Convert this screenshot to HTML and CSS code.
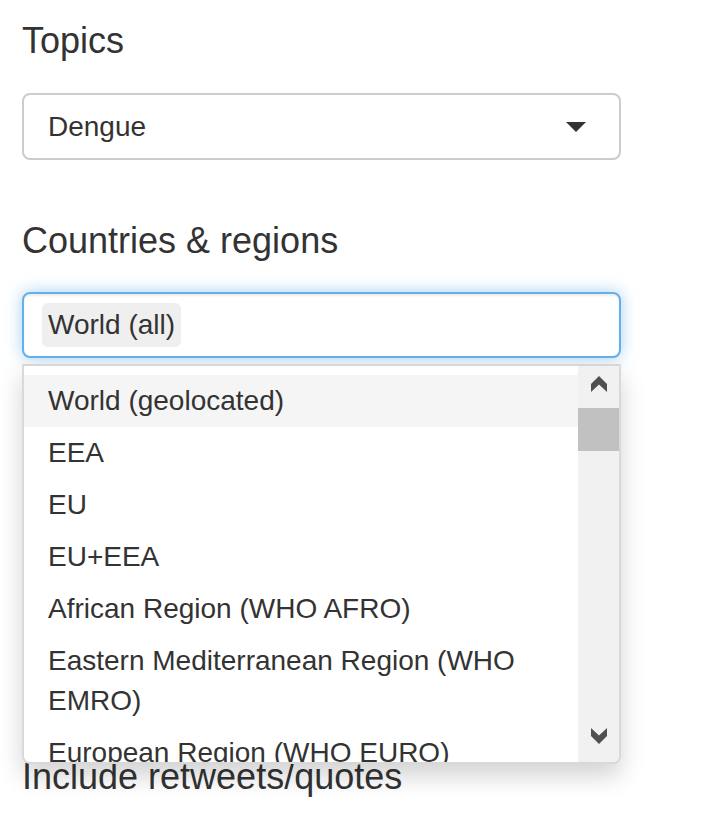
FILE: index.html
```html
<!DOCTYPE html>
<html lang="en">
<head>
<meta charset="utf-8">
<title>Filters</title>
<link rel="stylesheet" href="styles.css">
</head>
<body>
<div class="panel">
  <div class="form-group topics">
    <label class="control-label">Topics</label>
    <div class="select single">
      <span class="value">Dengue</span>
      <span class="caret"></span>
    </div>
  </div>
  <div class="form-group regions">
    <label class="control-label">Countries &amp; regions</label>
    <div class="select-wrap">
      <div class="select multi focus">
        <span class="chip">World (all)</span>
      </div>
      <div class="dropdown">
        <div class="options">
          <div class="option active">World (geolocated)</div>
          <div class="option">EEA</div>
          <div class="option">EU</div>
          <div class="option">EU+EEA</div>
          <div class="option">African Region (WHO AFRO)</div>
          <div class="option">Eastern Mediterranean Region (WHO EMRO)</div>
          <div class="option">European Region (WHO EURO)</div>
          <div class="option">Region of the Americas (WHO AMRO)</div>
        </div>
        <div class="scrollbar">
          <div class="sb-btn up">
            <svg width="16" height="16" viewBox="0 0 16 16"><polygon points="8,0 16,8 16,16 8,8.5 0,16 0,8" fill="#505050"/></svg>
          </div>
          <div class="sb-thumb"></div>
          <div class="sb-btn down">
            <svg width="16" height="16" viewBox="0 0 16 16"><polygon points="0,0 8,7.5 16,0 16,8 8,16 0,8" fill="#505050"/></svg>
          </div>
        </div>
      </div>
    </div>
  </div>
  <div class="form-group retweets">
    <label class="control-label">Include retweets/quotes</label>
  </div>
</div>
</body>
</html>
```

FILE: styles.css
```css
html, body {
  margin: 0;
  padding: 0;
  background: #ffffff;
}

body {
  font-family: "Liberation Sans", Arial, sans-serif;
  color: #333333;
}

.panel {
  padding: 21px 0 0 22px;
  width: 599px;
}

.control-label {
  display: block;
  font-size: 36px;
  line-height: 40px;
  font-weight: normal;
}

.topics .control-label {
  margin-bottom: 32px;
}

.topics {
  margin-bottom: 61px;
}

.regions .control-label {
  margin-bottom: 31px;
}

.regions {
  margin-bottom: 399px;
}

.select {
  box-sizing: border-box;
  width: 599px;
  border: 2px solid #cccccc;
  border-radius: 8px;
  background: #ffffff;
  font-size: 28px;
  line-height: 40px;
}

.single {
  display: flex;
  align-items: center;
  justify-content: space-between;
  padding: 12px 33px 11px 24px;
}

.caret {
  width: 0;
  height: 0;
  border-top: 10px solid #333333;
  border-left: 10px solid transparent;
  border-right: 10px solid transparent;
}

.select-wrap {
  position: relative;
}

.multi {
  display: flex;
  padding: 9px 18px;
}

.focus {
  border-color: #66afe9;
  box-shadow: inset 0 2px 2px rgba(0, 0, 0, 0.075), 0 0 16px rgba(102, 175, 233, 0.6);
}

.chip {
  background: #efefef;
  border-radius: 6px;
  padding: 2px 6px;
  color: #333333;
}

.dropdown {
  position: absolute;
  top: 72px;
  left: 0;
  z-index: 10;
  box-sizing: border-box;
  width: 599px;
  height: 400px;
  display: flex;
  background: #ffffff;
  border: 2px solid rgba(0, 0, 0, 0.15);
  border-top-color: #d6d6d6;
  border-radius: 0 0 8px 8px;
  box-shadow: 0 12px 24px rgba(0, 0, 0, 0.175);
  overflow: hidden;
}

.options {
  flex: 1;
  padding-top: 9px;
  overflow: hidden;
  font-size: 28px;
  line-height: 40px;
}

.option {
  padding: 6px 24px;
  color: #333333;
}

.option.active {
  background: #f5f5f5;
}

.scrollbar {
  width: 41px;
  flex: none;
  display: flex;
  flex-direction: column;
  background: #f1f1f1;
}

.sb-btn {
  height: 42px;
  display: flex;
  justify-content: center;
  align-items: flex-start;
  box-sizing: border-box;
}

.sb-btn svg {
  display: block;
}

.sb-btn.up {
  padding-top: 10px;
}

.sb-thumb {
  height: 43px;
  background: #c1c1c1;
}

.sb-btn.down {
  margin-top: auto;
  padding-top: 8px;
}
```
